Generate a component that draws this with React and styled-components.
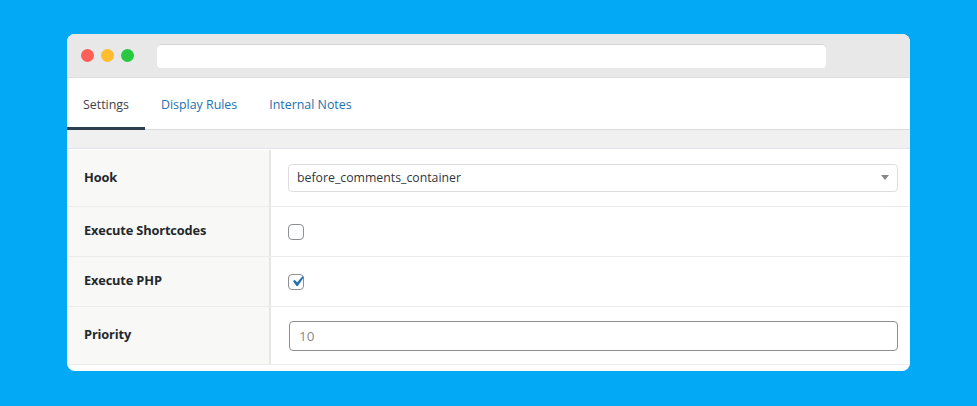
import React from 'react';
import styled, { createGlobalStyle } from 'styled-components';

const GlobalStyle = createGlobalStyle`
  html, body {
    margin: 0;
    padding: 0;
    background: #03a9f4;
  }
  body {
    padding-top: 34px;
    font-family: "Open Sans", "Noto Sans", sans-serif;
  }
`;

const Window = styled.div`
  width: 843px;
  margin: 0 auto;
  background: #fff;
  border-radius: 8px;
  overflow: hidden;
  padding-bottom: 6px;
`;

const TitleBar = styled.div`
  height: 44px;
  background: #e8e8e8;
  border-bottom: 1px solid #dedede;
  box-sizing: border-box;
  display: flex;
  align-items: center;
  padding-left: 13.5px;
`;

const Dot = styled.span`
  width: 13px;
  height: 13px;
  border-radius: 50%;
  background: ${(p) => p.color};
  margin-right: 7px;
`;

const UrlBar = styled.div`
  margin-left: 16.5px;
  width: 669px;
  height: 24px;
  background: #fff;
  border-radius: 4px;
  box-shadow: inset 0 1px 0 #d4d4d4;
`;

const Tabs = styled.div`
  display: flex;
  height: 51px;
  border-bottom: 1px solid #dcdcde;
`;

const Tab = styled.div`
  padding: 0 16px;
  display: flex;
  align-items: center;
  font-size: 12.4px;
  color: ${(p) => (p.active ? '#3c434a' : '#2271b1')};
  border-bottom: 3px solid ${(p) => (p.active ? '#2c3e50' : 'transparent')};
  padding-top: 3px;
  margin-bottom: -1px;
`;

const Strip = styled.div`
  height: 18px;
  background: #f0f0f1;
  border-bottom: 1px solid #e2e6ea;
`;

const Table = styled.div`
  display: flex;
  flex-direction: column;
  padding-top: 1px;
`;

const Row = styled.div`
  display: grid;
  grid-template-columns: 204px 1fr;
  min-height: ${(p) => p.h}px;
  border-bottom: 1px solid #ececec;
`;

const Label = styled.div`
  background: #f8f8f7;
  border-right: 2px solid #e6e6e4;
  display: flex;
  align-items: center;
  padding: 0 0 3px 17px;
  font-size: 12.8px;
  letter-spacing: -0.15px;
  font-weight: 700;
  color: #23282d;
`;

const Field = styled.div`
  display: flex;
  align-items: center;
  padding: 0 12px 0 17px;
`;

const Select = styled.div`
  flex: 1;
  height: 28px;
  box-sizing: border-box;
  border: 1px solid #dddddd;
  border-radius: 4px;
  display: flex;
  align-items: center;
  justify-content: space-between;
  padding: 0 9px 0 8px;
  font-size: 12.3px;
  color: #32373c;
  margin-top: -1px;
`;

const Caret = styled.span`
  width: 0;
  height: 0;
  border-left: 4px solid transparent;
  border-right: 4px solid transparent;
  border-top: 5px solid #888;
  margin-right: -1px;
`;

const Checkbox = styled.span`
  width: 16px;
  height: 16px;
  box-sizing: border-box;
  border: 1px solid #8c8f94;
  border-radius: 4px;
  background: #fff;
  display: flex;
  align-items: center;
  justify-content: center;
`;

const Input = styled.div`
  flex: 1;
  height: 30px;
  box-sizing: border-box;
  border: 1px solid #8c8f94;
  border-radius: 4px;
  display: flex;
  align-items: center;
  padding: 0 9px;
  font-size: 13.5px;
  color: #8a8a8a;
  margin-left: 1px;
`;

const Check = () => (
  <svg width="21" height="21" viewBox="0 0 20 20" style={{ margin: '-1px -3px 0 -1px', flexShrink: 0 }}>
    <path d="M14.83 4.89l1.34.94-5.81 8.38H9.02L5.78 9.67l1.34-1.25 2.57 2.4z" fill="#2271b1" />
  </svg>
);

export default function App() {
  return (
    <>
      <GlobalStyle />
      <Window>
        <TitleBar>
          <Dot color="#ff5f57" />
          <Dot color="#febc2e" />
          <Dot color="#28c840" />
          <UrlBar />
        </TitleBar>
        <Tabs>
          <Tab active>Settings</Tab>
          <Tab>Display Rules</Tab>
          <Tab>Internal Notes</Tab>
        </Tabs>
        <Strip />
        <Table>
          <Row h={56}>
            <Label>Hook</Label>
            <Field>
              <Select>
                before_comments_container
                <Caret />
              </Select>
            </Field>
          </Row>
          <Row h={49}>
            <Label>Execute Shortcodes</Label>
            <Field>
              <Checkbox />
            </Field>
          </Row>
          <Row h={49}>
            <Label>Execute PHP</Label>
            <Field>
              <Checkbox>
                <Check />
              </Checkbox>
            </Field>
          </Row>
          <Row h={57}>
            <Label>Priority</Label>
            <Field>
              <Input>10</Input>
            </Field>
          </Row>
        </Table>
      </Window>
    </>
  );
}
